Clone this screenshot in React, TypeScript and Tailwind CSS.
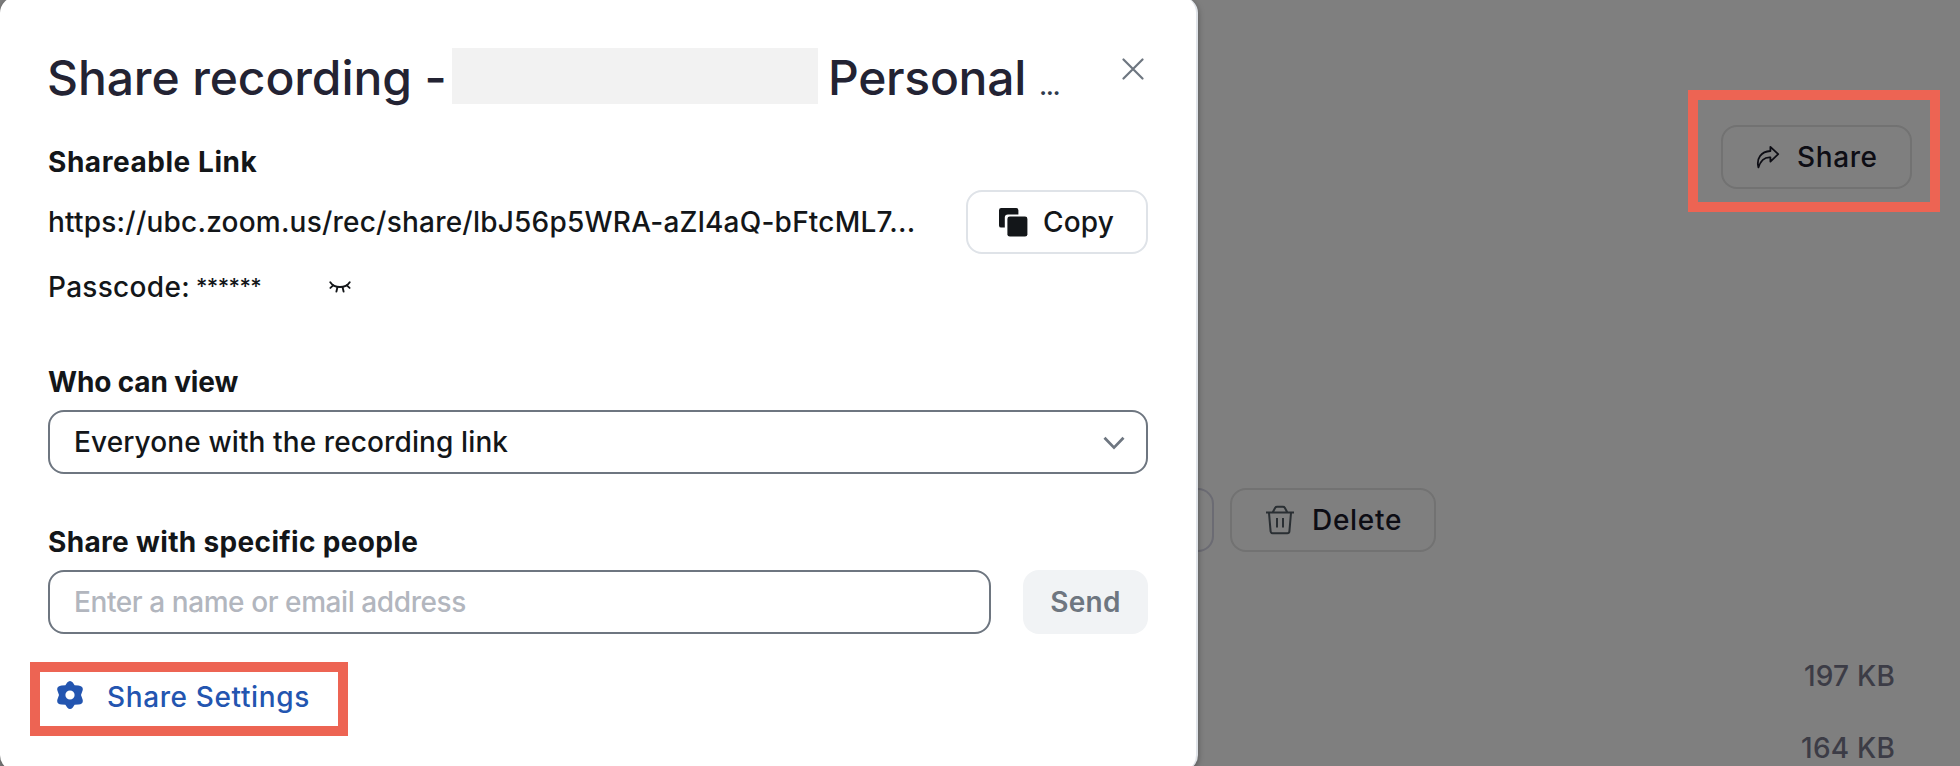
interface FileSize {
  id: string;
  label: string;
}

const files: FileSize[] = [
  { id: "audio", label: "197 KB" },
  { id: "chat", label: "164 KB" },
];

function CloseIcon() {
  return (
    <svg width="22" height="22" viewBox="0 0 22 22" fill="none" stroke="#6e7680" strokeWidth="2.2" strokeLinecap="round">
      <path d="M1.5 1.5 L20.5 20.5 M20.5 1.5 L1.5 20.5" />
    </svg>
  );
}

function CopyIcon() {
  return (
    <svg width="30" height="30" viewBox="0 0 30 30" fill="#131619">
      <path d="M3.2 1 H18.2 A2.2 2.2 0 0 1 20.4 3.2 V7.4 H10 A3.2 3.2 0 0 0 6.8 10.6 V20.6 H3.2 A2.2 2.2 0 0 1 1 18.4 V3.2 A2.2 2.2 0 0 1 3.2 1 Z" />
      <rect x="9.4" y="9.6" width="20" height="20" rx="2.4" />
    </svg>
  );
}

function ClosedEyeIcon() {
  return (
    <svg width="22" height="12" viewBox="0 0 22 12" fill="none" stroke="#131619" strokeWidth="1.9" strokeLinecap="round">
      <path d="M1.3 1.2 C5.5 7.6 16.5 7.6 20.7 1.2" />
      <path d="M4.2 4.4 L1.4 6.9 M8.4 6.2 L7.4 10.6 M13.6 6.2 L14.6 10.6 M17.8 4.4 L20.6 6.9" />
    </svg>
  );
}

function ChevronIcon() {
  return (
    <svg width="22" height="14" viewBox="0 0 22 14" fill="none" stroke="#6e7680" strokeWidth="2.8">
      <path d="M1.5 1.8 L11 11.6 L20.5 1.8" />
    </svg>
  );
}

function GearIcon() {
  return (
    <svg width="28" height="30" viewBox="0 0 28 30">
      <path
        d="M11.2 2.6 Q14 -0.6 16.8 2.6 L18.6 5.2 L22.4 5.4 Q27.8 6.2 26.6 10.6 L25 15 L26.6 19.4 Q27.8 23.8 22.4 24.6 L18.6 24.8 L16.8 27.4 Q14 30.6 11.2 27.4 L9.4 24.8 L5.6 24.6 Q0.2 23.8 1.4 19.4 L3 15 L1.4 10.6 Q0.2 6.2 5.6 5.4 L9.4 5.2 Z M14 10.4 A4.6 4.6 0 1 0 14 19.6 A4.6 4.6 0 1 0 14 10.4 Z"
        fill="#2355b0"
        fillRule="evenodd"
      />
    </svg>
  );
}

function ShareIcon() {
  return (
    <svg width="24" height="24" viewBox="0 0 24 24" fill="none" stroke="#0d0d14" strokeWidth="1.8" strokeLinejoin="round">
      <path d="M14.4 1.8 L22.2 9.2 L14.4 16.6 V12.4 C9 12 4.8 15 2.4 22.4 C0.2 13.6 5 6.4 14.4 6 Z" />
    </svg>
  );
}

function TrashIcon() {
  return (
    <svg width="28" height="30" viewBox="0 0 28 30" fill="none" stroke="#2a2f33" strokeWidth="2">
      <path d="M0 7.6 H28 M6.6 7.4 L9.2 2.8 Q9.8 1.8 11 1.8 H17 Q18.2 1.8 18.8 2.8 L21.4 7.4" />
      <path d="M3 7.8 L4.6 26.4 Q4.8 28.2 6.6 28.2 H21.4 Q23.2 28.2 23.4 26.4 L25 7.8 M11 13 V22.6 M17 13 V22.6" />
    </svg>
  );
}

function ShareDialog() {
  return (
    <div className="relative z-10 -mt-[3px] h-[774px] w-[1198px] shrink-0 rounded-[16px] border-r-2 border-[#dfe3e8] bg-white px-12 pt-[3px] shadow-[0_2px_6px_rgba(0,0,0,0.35)]">
      {/* Title */}
      <div className="flex h-[120px] pt-12">
        <h1 className="-ml-px w-[405px] whitespace-nowrap text-[48px] leading-[60px] font-medium tracking-[-0.1px] text-[#232333]">
          Share recording -
        </h1>
        <div className="h-14 w-[366px] bg-[#f2f2f2]" />
        <div className="flex w-[304px] items-baseline whitespace-nowrap pl-[10px] text-[48px] leading-[60px] font-medium tracking-[-0.3px] text-[#232333]">
          <span className="w-[211px]">Personal</span>
          <span className="text-[27px] leading-none tracking-[-1.4px] text-[#2e3a4d]">...</span>
        </div>
        <button className="mt-[10px] h-[22px]">
          <CloseIcon />
        </button>
      </div>

      {/* Link */}
      <h2 className="mt-6 h-[46px] text-[28px] leading-9 font-bold tracking-[0.55px]">Shareable Link</h2>
      <div className="flex h-16 items-center justify-between">
        <p className="whitespace-nowrap text-[28px] font-medium tracking-[0.22px]">https://ubc.zoom.us/rec/share/lbJ56p5WRA-aZl4aQ-bFtcML7...</p>
        <button className="flex h-16 w-[182px] items-center rounded-[16px] border-2 border-[#dfe3e8] pl-[30px] text-[28px] font-medium tracking-[0.2px]">
          <CopyIcon />
          <span className="ml-[15px]">Copy</span>
        </button>
      </div>
      <div className="mt-3 flex h-[42px] items-center text-[28px] font-medium">
        <span className="w-[148px] whitespace-nowrap tracking-[0.3px]">Passcode:</span>
        <span className="w-[133px] pb-[2px] text-[22px] tracking-[-0.6px]">******</span>
        <ClosedEyeIcon />
      </div>

      {/* Permissions */}
      <h2 className="mt-[56px] h-[46px] text-[28px] leading-9 font-bold tracking-[-0.15px]">Who can view</h2>
      <div className="flex h-16 items-center justify-between rounded-[16px] border-2 border-[#6e7680] pl-6 pr-[21px] text-[28px] font-medium tracking-[0.11px]">
        <span>Everyone with the recording link</span>
        <span className="pt-[2px]">
          <ChevronIcon />
        </span>
      </div>

      <h2 className="mt-[50px] h-[46px] text-[28px] leading-9 font-bold tracking-[0.34px]">Share with specific people</h2>
      <div className="flex gap-8">
        <div className="flex h-16 w-[943px] items-center rounded-[16px] border-2 border-[#6e7680] pl-6 text-[28px] font-medium tracking-[-0.42px] text-[#b2b6be]">
          Enter a name or email address
        </div>
        <button className="h-16 w-[125px] rounded-[16px] bg-[#f1f3f5] text-[28px] font-semibold tracking-[0.3px] text-[#6e7680]">Send</button>
      </div>

      <div className="-ml-[18px] mt-7 flex h-[74px] w-[318px] items-center border-[10px] border-[#ed6453] pb-1 pl-4 text-[#2355b0]">
        <span className="pb-1">
          <GearIcon />
        </span>
        <span className="ml-[23px] whitespace-nowrap text-[28px] font-medium tracking-[0.62px]">Share Settings</span>
      </div>
    </div>
  );
}

function RecordingPage() {
  return (
    <div className="flex flex-1 flex-col text-[28px] text-[#0d0d14]">
      <div className="mt-[90px] mr-5 flex h-[122px] w-[252px] shrink-0 self-end border-[10px] border-[#ed6453] pl-[23px] pt-[25px]">
        <button className="flex h-16 w-[191px] items-center rounded-[16px] border-2 border-[#727272] pl-[33px] font-medium tracking-[0.6px]">
          <ShareIcon />
          <span className="ml-[17px]">Share</span>
        </button>
      </div>
      <div className="mt-[276px] flex shrink-0 gap-4">
        <div className="h-16 w-4 rounded-r-[16px] border-2 border-l-0 border-[#6b6b73]" />
        <button className="flex h-16 w-[206px] items-center rounded-[16px] border-2 border-[#727272] pl-[34px] font-medium tracking-[0.7px]">
          <TrashIcon />
          <span className="ml-[18px]">Delete</span>
        </button>
      </div>
      <div className="mt-[88px] flex shrink-0 flex-col items-end pr-[65px] font-medium tracking-[0.2px] text-[#3c3c46]">
        {files.map((file) => (
          <span key={file.id} className="h-[72px] leading-[72px]">
            {file.label}
          </span>
        ))}
      </div>
    </div>
  );
}

export default function App() {
  return (
    <div className="flex h-[766px] w-[1960px] overflow-hidden bg-[#7f7f7f] font-['Inter',sans-serif] text-[#131619]">
      <ShareDialog />
      <RecordingPage />
    </div>
  );
}
